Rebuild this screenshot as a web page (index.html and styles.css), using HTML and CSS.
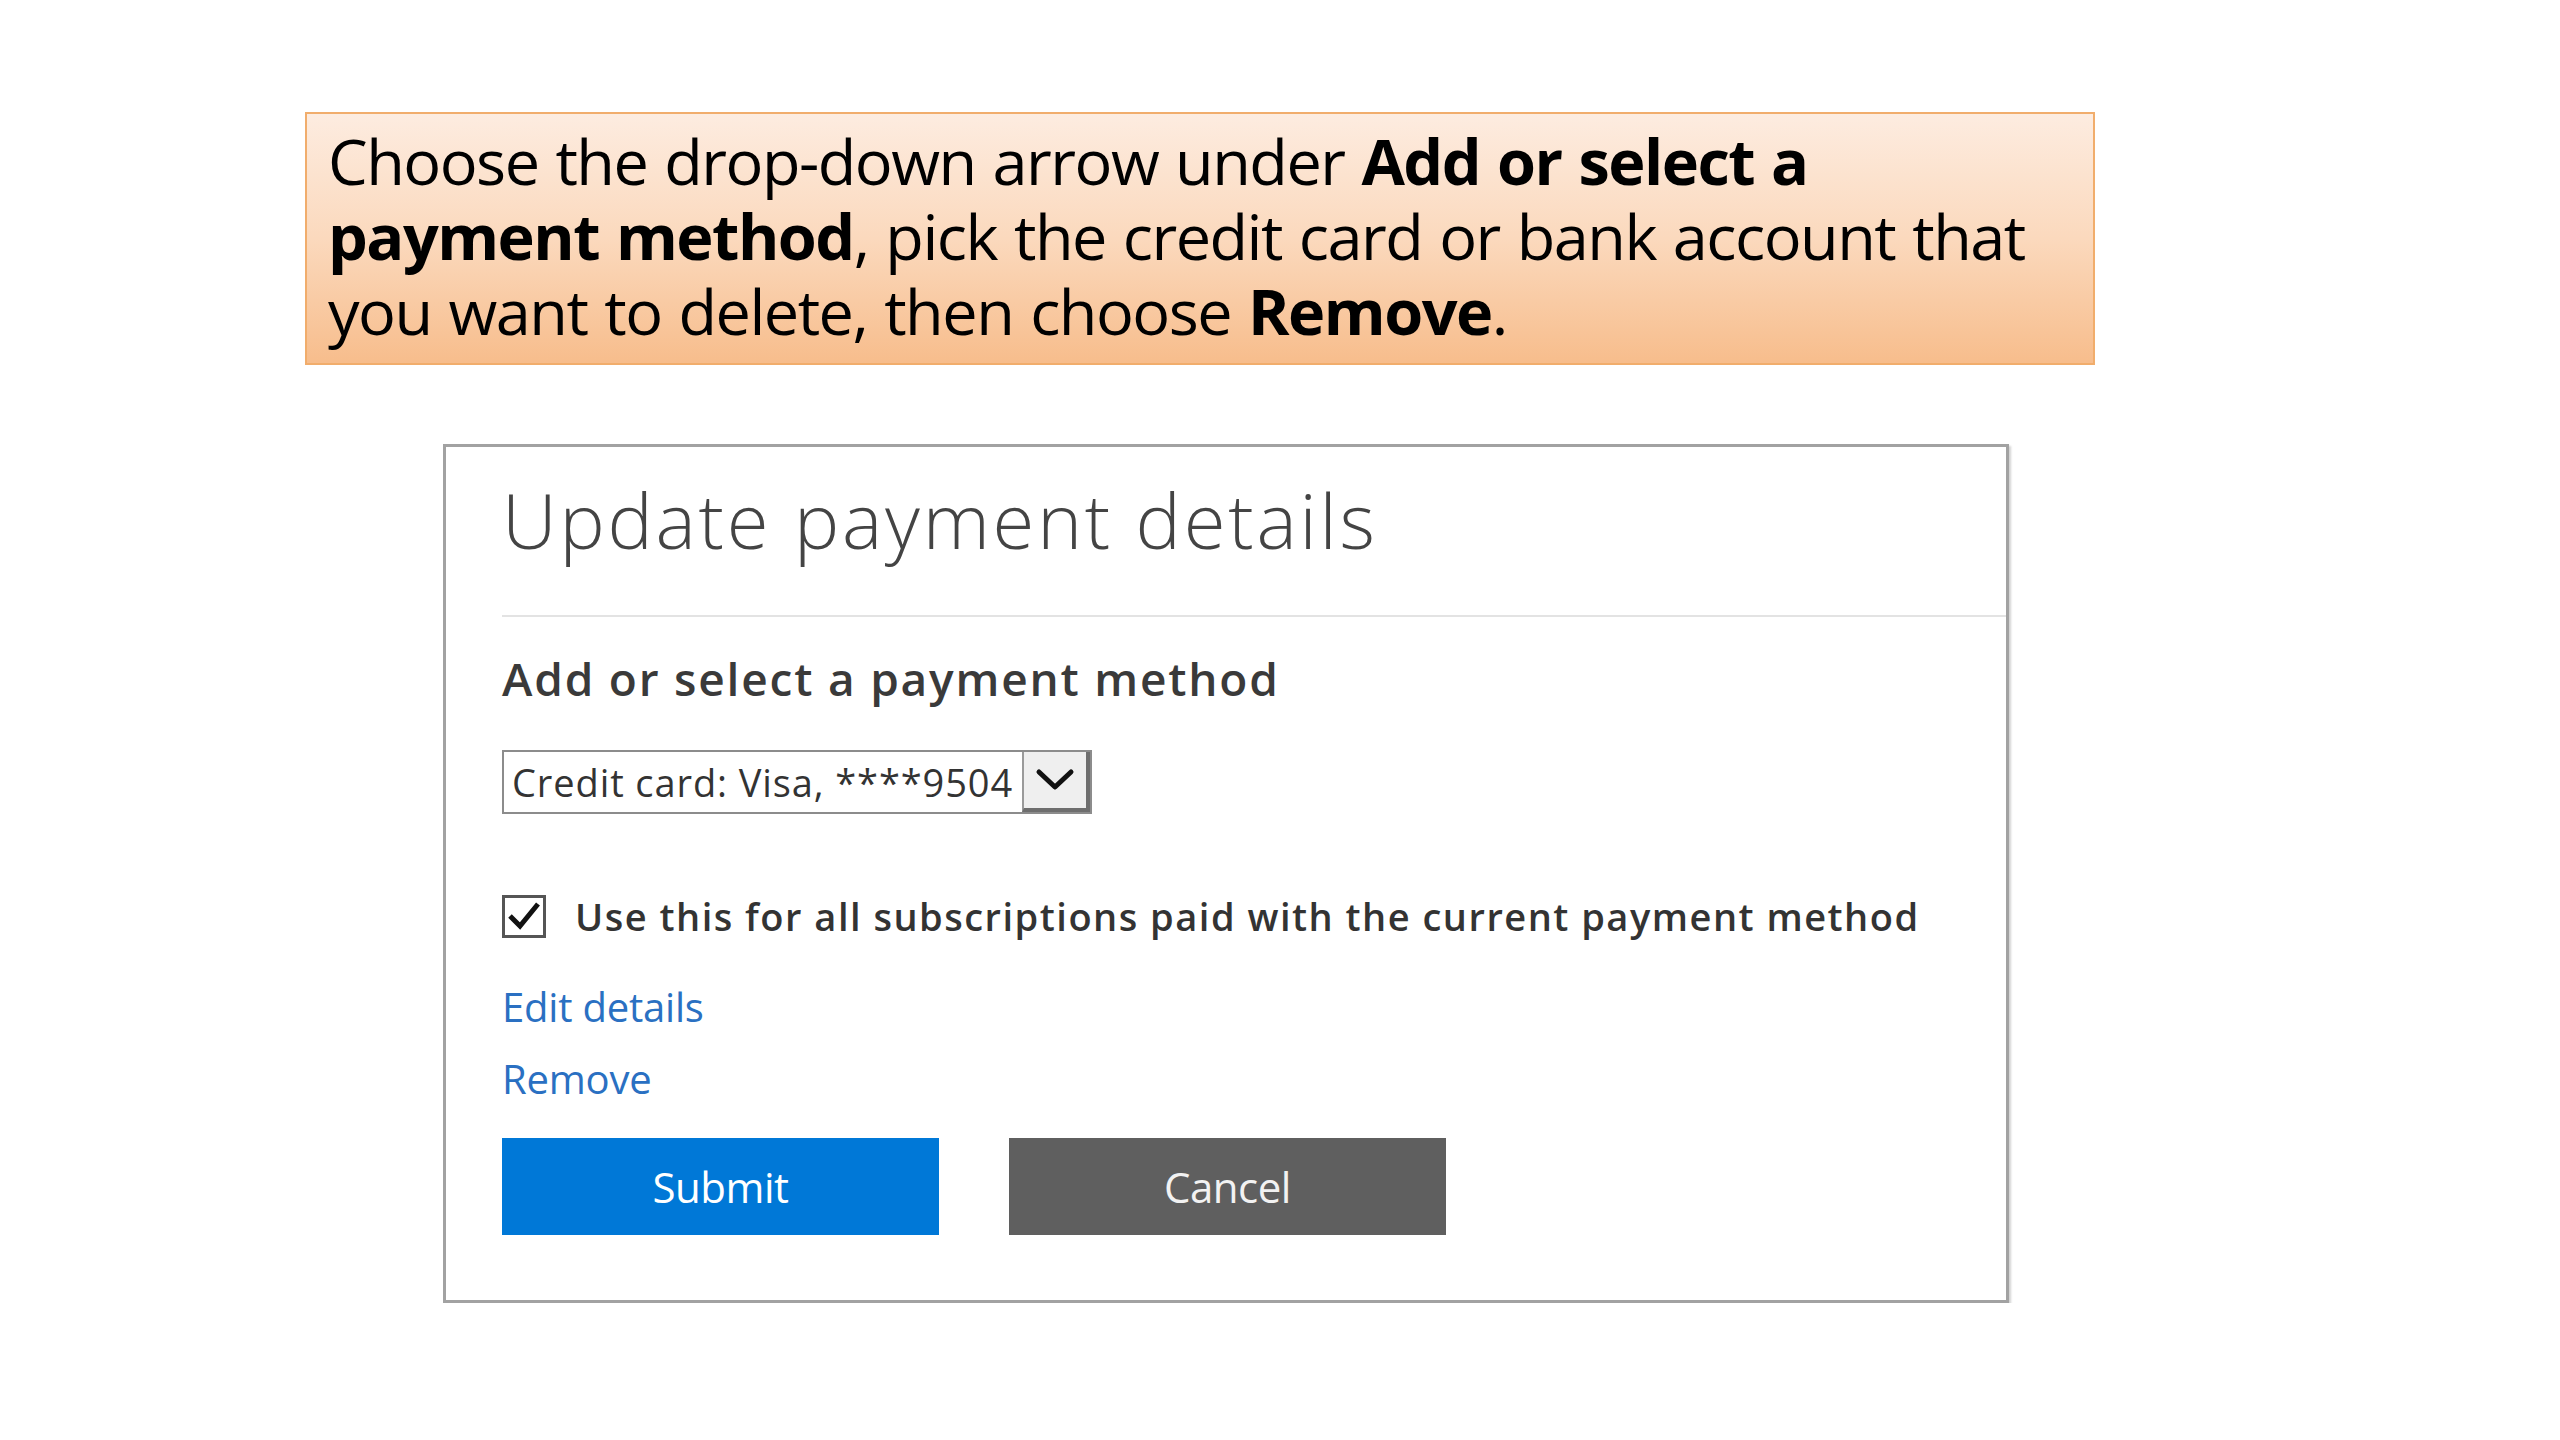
FILE: index.html
```html
<!DOCTYPE html>
<html lang="en">
<head>
<meta charset="utf-8">
<title>Update payment details</title>
<link rel="stylesheet" href="styles.css">
</head>
<body>
<main class="page">
  <div class="callout">
    <p class="callout-text">Choose the drop-down arrow under <b>Add or select a</b><br><b>payment method</b>, pick the credit card or bank account that<br>you want to delete, then choose <b>Remove</b>.</p>
  </div>

  <section class="card">
    <h1 class="card-title">Update payment details</h1>
    <hr class="divider">
    <h2 class="subhead">Add or select a payment method</h2>

    <div class="select">
      <span class="select-value">Credit card: Visa, ****9504</span>
      <span class="select-arrow">
        <svg width="40" height="24" viewBox="0 0 40 24"><polyline points="4,4 20,19 36,4" fill="none" stroke="#111" stroke-width="5" stroke-linejoin="round" stroke-linecap="round"/></svg>
      </span>
    </div>

    <label class="check-row">
      <span class="checkbox">
        <svg width="38" height="36" viewBox="0 0 38 36"><polyline points="5,18 15,28 33,6" fill="none" stroke="#111" stroke-width="5" stroke-linejoin="miter"/></svg>
      </span>
      <span class="check-label">Use this for all subscriptions paid with the current payment method</span>
    </label>

    <a class="link link-edit" href="#">Edit details</a>
    <a class="link link-remove" href="#">Remove</a>

    <div class="actions">
      <button class="btn btn-primary" type="button">Submit</button>
      <button class="btn btn-secondary" type="button">Cancel</button>
    </div>
  </section>
</main>
</body>
</html>
```

FILE: styles.css
```css
html, body {
  margin: 0;
  padding: 0;
  background: #ffffff;
}

body {
  font-family: "Open Sans", "Noto Sans", "DejaVu Sans", sans-serif;
  color: #000;
}

.page {
  display: flex;
  flex-direction: column;
  align-items: flex-start;
  padding: 112px 0 0 305px;
}

/* Callout */
.callout {
  box-sizing: border-box;
  width: 1790px;
  height: 253px;
  border: 2px solid #f1ad6c;
  background: linear-gradient(to bottom, #fdece0 0%, #fbd9bd 50%, #f7bd8c 100%);
  padding: 9px 0 0 21px;
}

.callout-text {
  margin: 0;
  font-size: 63px;
  line-height: 75px;
  letter-spacing: -1.5px;
  word-spacing: 2px;
  color: #000;
  font-weight: 400;
}

.callout-text b {
  font-weight: 700;
}

/* Card */
.card {
  box-sizing: border-box;
  margin: 79px 0 0 138px;
  width: 1566px;
  height: 859px;
  border: 3px solid #a2a2a2;
  box-shadow: 2px 2px 2px rgba(0, 0, 0, 0.18);
  background: #fff;
  padding: 28px 0 0 56px;
  display: flex;
  flex-direction: column;
  align-items: flex-start;
}

.card-title {
  margin: 0;
  font-size: 76px;
  line-height: 89px;
  font-weight: 300;
  color: #444;
  letter-spacing: 2.8px;
}

.divider {
  align-self: stretch;
  margin: 51px 0 0 0;
  border: 0;
  height: 2px;
  background: #e3e3e3;
}

.subhead {
  margin: 33px 0 0 0;
  font-size: 46px;
  line-height: 56px;
  font-weight: 600;
  color: #3a3a3a;
  letter-spacing: 1.8px;
}

/* Select */
.select {
  margin-top: 44px;
  box-sizing: border-box;
  width: 590px;
  height: 64px;
  border: 2px solid #8c8c8c;
  display: flex;
  align-items: stretch;
  background: #fff;
}

.select-value {
  flex: 1;
  display: flex;
  align-items: center;
  padding-left: 8px;
  font-size: 38px;
  color: #333;
  letter-spacing: 0.9px;
  white-space: nowrap;
  overflow: hidden;
}

.select-arrow {
  box-sizing: border-box;
  width: 68px;
  display: flex;
  align-items: center;
  justify-content: center;
  background: #efefef;
  border-left: 2px solid #9a9a9a;
  border-right: 4px solid #6e6e6e;
  border-bottom: 4px solid #6e6e6e;
}

/* Checkbox row */
.check-row {
  margin-top: 80px;
  display: flex;
  align-items: center;
  gap: 29px;
}

.checkbox {
  box-sizing: border-box;
  width: 44px;
  height: 43px;
  border: 3px solid #555;
  background: #fff;
  display: flex;
  align-items: center;
  justify-content: center;
}

.check-label {
  font-size: 38px;
  line-height: 44px;
  font-weight: 600;
  color: #333;
  letter-spacing: 1.5px;
}

/* Links */
.link {
  font-size: 40px;
  line-height: 50px;
  color: #2a70c2;
  text-decoration: none;
  letter-spacing: -0.2px;
}

.link-edit {
  margin-top: 44px;
}

.link-remove {
  margin-top: 22px;
}

/* Buttons */
.actions {
  margin-top: 34px;
  display: flex;
  gap: 70px;
}

.btn {
  width: 437px;
  height: 97px;
  border: 0;
  font-family: "Open Sans", "Noto Sans", "DejaVu Sans", sans-serif;
  font-size: 42px;
  color: #fff;
  letter-spacing: -0.5px;
  padding: 0;
}

.btn-primary {
  background: #0078d7;
}

.btn-secondary {
  background: #5f5f5f;
  color: #f2f2f2;
}
```
